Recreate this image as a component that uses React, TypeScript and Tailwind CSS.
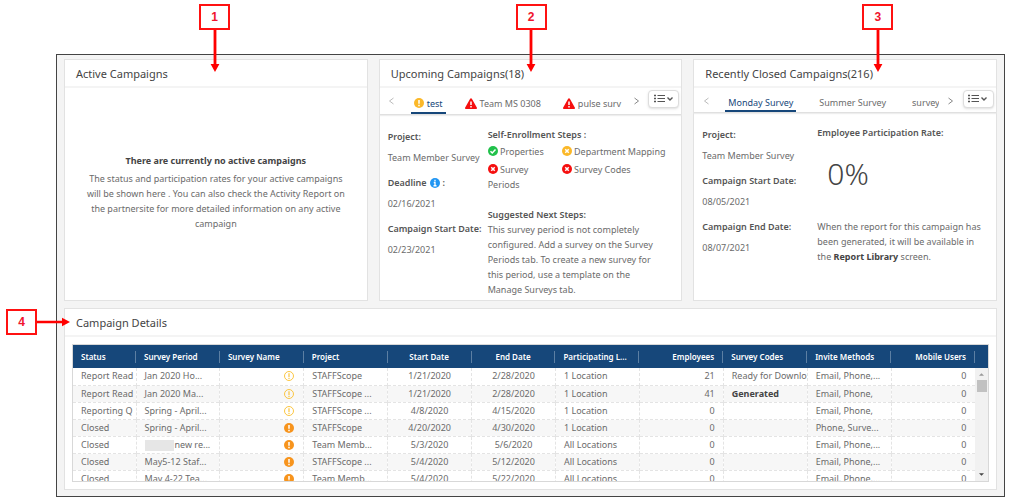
import { ReactNode } from "react";
import clsx from "clsx";

interface CalloutProps {
    label: string;
    className: string;
    side?: boolean;
}

interface CampaignRow {
    status: string;
    period: string;
    redacted?: boolean;
    filled: boolean;
    project: string;
    start: string;
    end: string;
    locations: string;
    employees: number;
    codes: string;
    invite: string;
    mobile: number;
}

const rows: CampaignRow[] = [
    {
        status: "Report Read",
        period: "Jan 2020 Ho...",
        filled: false,
        project: "STAFFScope",
        start: "1/21/2020",
        end: "2/28/2020",
        locations: "1 Location",
        employees: 21,
        codes: "Ready for Downlo",
        invite: "Email, Phone,...",
        mobile: 0,
    },
    {
        status: "Report Read",
        period: "Jan 2020 Ma...",
        filled: false,
        project: "STAFFScope ...",
        start: "1/21/2020",
        end: "2/28/2020",
        locations: "1 Location",
        employees: 41,
        codes: "Generated",
        invite: "Email, Phone,",
        mobile: 0,
    },
    {
        status: "Reporting Q",
        period: "Spring - April...",
        filled: false,
        project: "STAFFScope ...",
        start: "4/8/2020",
        end: "4/15/2020",
        locations: "1 Location",
        employees: 0,
        codes: "",
        invite: "Email, Phone,",
        mobile: 0,
    },
    {
        status: "Closed",
        period: "Spring - April...",
        filled: true,
        project: "STAFFScope",
        start: "4/20/2020",
        end: "4/30/2020",
        locations: "1 Location",
        employees: 0,
        codes: "",
        invite: "Phone, Surve...",
        mobile: 0,
    },
    {
        status: "Closed",
        period: "new re...",
        redacted: true,
        filled: true,
        project: "Team Memb...",
        start: "5/3/2020",
        end: "5/6/2020",
        locations: "All Locations",
        employees: 0,
        codes: "",
        invite: "Email, Phone,...",
        mobile: 0,
    },
    {
        status: "Closed",
        period: "May5-12 Staf...",
        filled: true,
        project: "STAFFScope ...",
        start: "5/4/2020",
        end: "5/12/2020",
        locations: "All Locations",
        employees: 0,
        codes: "",
        invite: "Email, Phone,...",
        mobile: 0,
    },
    {
        status: "Closed",
        period: "May 4-22 Tea...",
        filled: true,
        project: "Team Memb...",
        start: "5/4/2020",
        end: "5/22/2020",
        locations: "All Locations",
        employees: 0,
        codes: "",
        invite: "Email, Phone,...",
        mobile: 0,
    },
];

const columns = [
    { name: "Status", align: "text-left" },
    { name: "Survey Period", align: "text-left" },
    { name: "Survey Name", align: "text-left" },
    { name: "Project", align: "text-left" },
    { name: "Start Date", align: "text-center" },
    { name: "End Date", align: "text-center" },
    { name: "Participating L...", align: "text-left" },
    { name: "Employees", align: "text-right" },
    { name: "Survey Codes", align: "text-left" },
    { name: "Invite Methods", align: "text-left" },
    { name: "Mobile Users", align: "text-right" },
];

const Callout = ({ label, className, side }: CalloutProps) => (
    <div
        className={clsx(
            "absolute z-10 flex items-center",
            side ? "flex-row" : "flex-col",
            className
        )}
    >
        <span className="flex h-[26px] w-[31px] items-center justify-center border-2 border-[#f11] bg-white font-['Liberation_Sans'] text-xs font-bold text-[#f0142d]">
            {label}
        </span>
        {side ? (
            <svg width="33" height="10" viewBox="0 0 33 10" fill="#f00">
                <path d="M0 3.7h25V.8l8 4.2-8 4.2V6.3H0z" />
            </svg>
        ) : (
            <svg width="10" height="42" viewBox="0 0 10 42" fill="#f00">
                <path d="M3.6 0h2.8v34h3L5 42 .6 34h3z" />
            </svg>
        )}
    </div>
);

const CircleIcon = ({ color, children }: { color: string; children: ReactNode }) => (
    <svg
        width="10"
        height="10"
        viewBox="0 0 20 20"
        fill="none"
        stroke="#fff"
        strokeWidth="3"
        className="inline-block shrink-0 align-[-1px]"
    >
        <circle cx="10" cy="10" r="10" fill={color} stroke="none" />
        {children}
    </svg>
);

const CheckIcon = () => (
    <CircleIcon color="#21c14b">
        <path d="M5 10.5l3.5 3.5L15 7" />
    </CircleIcon>
);

const CrossIcon = ({ color }: { color: string }) => (
    <CircleIcon color={color}>
        <path d="M6.5 6.5l7 7M13.5 6.5l-7 7" />
    </CircleIcon>
);

const AlertIcon = ({ color }: { color: string }) => (
    <CircleIcon color={color}>
        <path d="M10 4v7.5M10 13.5v3" />
    </CircleIcon>
);

const AlertOutlineIcon = () => (
    <svg
        width="10"
        height="10"
        viewBox="0 0 20 20"
        fill="none"
        stroke="#fbc02d"
        strokeWidth="1.8"
        className="inline-block"
    >
        <circle cx="10" cy="10" r="9" />
        <path d="M10 4.5v7.5M10 13.5v2.5" strokeWidth="2.2" />
    </svg>
);

const InfoIcon = () => (
    <CircleIcon color="#2196f3">
        <path d="M10 3.5v3M7.5 9H10v6M7 15.5h6" strokeWidth="2.6" />
    </CircleIcon>
);

const TriangleIcon = () => (
    <svg width="12" height="11" viewBox="0 0 24 22" className="shrink-0">
        <path
            d="M12 .5c.9 0 1.5.5 2 1.3l9.600 17c.9 1.500 0 3.200-1.700 3.200H2.100C.4 22-.5 20.300.4 18.800l9.600-17c.5-.8 1.100-1.300 2-1.300z"
            fill="#f50f0f"
        />
        <path d="M12 7v7M12 16v3.200" stroke="#fff" strokeWidth="3" />
    </svg>
);

const ListButton = () => (
    <button
        type="button"
        aria-label="All campaigns"
        className="mt-[2px] mr-[2px] flex h-[18px] w-[31px] shrink-0 items-center justify-center rounded-sm border border-[#ddd] bg-white shadow-sm"
    >
        <svg
            width="20"
            height="10"
            viewBox="0 0 20 10"
            fill="none"
            stroke="#555"
        >
            <path d="M0 1.500h2M0 4.500h2M0 7.500h2" strokeWidth="1.400" />
            <path d="M3.500 1.500h7.500M3.500 4.500h7.500M3.500 7.500h7.500" />
            <path d="M13.500 3.500l2.500 2.500 2.500-2.500" strokeWidth="1.400" />
        </svg>
    </button>
);

const Chevron = ({ d, label, color }: { d: string; label: string; color: string }) => (
    <button
        type="button"
        aria-label={label}
        className="flex h-[26px] w-6 shrink-0 items-center justify-center"
    >
        <svg width="5" height="8" viewBox="0 0 5 8" fill="none" stroke={color}>
            <path d={d} />
        </svg>
    </button>
);

const TabBar = ({ className, children }: { className: string; children: ReactNode }) => (
    <div
        className={clsx(
            "flex items-start border-b border-[#e0e0e0] shadow-[0_1px_1px_#eee]",
            className
        )}
    >
        <Chevron d="M4.500 1L.5 4l4 3" label="Previous" color="#bbb" />
        <div className="flex h-full min-w-0 flex-1 overflow-hidden pl-[7px]">
            {children}
        </div>
        <Chevron d="M.5 1l4 3-4 3" label="Next" color="#888" />
        <ListButton />
    </div>
);

const Tab = ({ active, className, children }: { active?: boolean; className?: string; children: ReactNode }) => (
    <button
        type="button"
        className={clsx(
            "flex h-full shrink-0 items-center gap-[3px] border-b-2 px-[3px] pt-[6px] whitespace-nowrap",
            active
                ? "border-[#16477a] text-[#16477a]"
                : "border-transparent",
            className
        )}
    >
        {children}
    </button>
);

const Card = ({ title, children }: { title: string; children: ReactNode }) => (
    <section className="relative flex min-w-0 flex-col border border-[#e2e2e2] bg-white">
        <h2 className="h-7 border-b-2 border-[#f4f4f4] pl-[11px] text-[11px] leading-[28px] text-[#444]">
            {title}
        </h2>
        {children}
    </section>
);

const Field = ({ label, value }: { label: ReactNode; value: string }) => (
    <div className="flex flex-col gap-[6px]">
        <dt className="font-semibold whitespace-nowrap text-[#555]">{label}</dt>
        <dd className="whitespace-nowrap">{value}</dd>
    </div>
);

const CampaignTable = () => (
    <div className="relative mx-[7px] mt-[7px] h-[138px] overflow-hidden border border-[#d8d8d8]">
        <table className="w-full table-fixed border-collapse whitespace-nowrap">
            <colgroup>
                <col className="w-[63px]" />
                {columns.slice(1).map((c) => (
                    <col key={c.name} />
                ))}
                <col className="w-[13px]" />
            </colgroup>
            <thead className="bg-[#16477a] text-[8px] text-white">
                <tr className="h-[23px]">
                    {columns.map((c) => (
                        <th key={c.name} className={clsx("p-0 font-semibold", c.align)}>
                            <div className="overflow-hidden border-r border-[#5c7fa3] px-2 leading-3">
                                {c.name}
                            </div>
                        </th>
                    ))}
                    <th className="p-0"></th>
                </tr>
            </thead>
            <tbody>
                {rows.map((row, i) => (
                    <tr
                        key={i}
                        className="h-[17px] border-b border-dashed border-[#e4e4e4] even:bg-[#f7f7f7] *:overflow-hidden *:border-r *:border-dashed *:border-[#e4e4e4] *:py-0 *:pl-2 *:leading-4"
                    >
                        <td>{row.status}</td>
                        <td>
                            {row.redacted && (
                                <span className="mr-px inline-block h-[11px] w-[29px] bg-[#e6e6e6] align-middle"></span>
                            )}
                            {row.period}
                        </td>
                        <td className="pr-[9px] text-right">
                            <span className="flex justify-end">
                                {row.filled ? (
                                    <AlertIcon color="#f7941d" />
                                ) : (
                                    <AlertOutlineIcon />
                                )}
                            </span>
                        </td>
                        <td>{row.project}</td>
                        <td className="pr-2 text-center">{row.start}</td>
                        <td className="pr-2 text-center">{row.end}</td>
                        <td>{row.locations}</td>
                        <td className="pr-2 text-right">{row.employees}</td>
                        <td
                            className={clsx(
                                row.codes === "Generated" &&
                                    "font-bold text-[#444]"
                            )}
                        >
                            {row.codes}
                        </td>
                        <td>{row.invite}</td>
                        <td className="pr-2 text-right">{row.mobile}</td>
                    </tr>
                ))}
            </tbody>
        </table>
        {/* scroll track under the header */}
        <div className="absolute top-[23px] right-0 bottom-0 flex w-[13px] flex-col items-center bg-[#f1f1f1] pt-[5px] pb-[5px]">
            <svg width="5" height="3" viewBox="0 0 6 3" fill="#999">
                <path d="M0 3l3-3 3 3z" />
            </svg>
            <div className="mt-1 h-3 w-[10px] bg-[#c1c1c1]"></div>
            <svg width="5" height="3" viewBox="0 0 6 3" fill="#444" className="mt-auto">
                <path d="M0 0l3 3 3-3z" />
            </svg>
        </div>
    </div>
);

const App = () => {
    return (
        <div className="bg-white pt-[54px] pr-[6px] pb-1 pl-14 font-['Noto_Sans','Open_Sans',sans-serif] text-[9px] leading-[15px] text-[#6b6b6b]">
            <main className="border border-[#444] bg-[#f4f4f4] px-[7px] pt-1 pb-[6px]">
                <div className="grid min-h-[242px] grid-cols-3 gap-[11px]">
                    <Card title="Active Campaigns">
                        <Callout label="1" className="-top-14 left-[134px]" />
                        <div className="flex flex-1 flex-col px-5 pt-[65px] text-center">
                            <h3 className="mb-[3px] font-bold text-[#444]">
                                There are currently no active campaigns
                            </h3>
                            <p>
                                The status and participation rates for your
                                active campaigns will be shown here . You can
                                also check the Activity Report on the
                                partnersite for more detailed information on any
                                active campaign
                            </p>
                        </div>
                    </Card>

                    <Card title="Upcoming Campaigns(18)">
                        <Callout label="2" className="-top-14 left-[136px]" />
                        <TabBar className="h-[27px]">
                            <Tab active>
                                <AlertIcon color="#fbb829" />
                                test
                            </Tab>
                            <Tab className="ml-4">
                                <TriangleIcon />
                                Team MS 0308
                            </Tab>
                            <Tab className="ml-4">
                                <TriangleIcon />
                                pulse surv
                            </Tab>
                        </TabBar>
                        <div className="flex pt-3 pl-2">
                            <dl className="flex w-[100px] shrink-0 flex-col gap-[10px] pt-[2px]">
                                <Field
                                    label="Project:"
                                    value="Team Member Survey"
                                />
                                <Field
                                    label={
                                        <span className="flex items-center gap-[3px]">
                                            Deadline <InfoIcon /> :
                                        </span>
                                    }
                                    value="02/16/2021"
                                />
                                <Field
                                    label="Campaign Start Date:"
                                    value="02/23/2021"
                                />
                            </dl>
                            <div className="min-w-0 flex-1">
                                <h3 className="font-semibold text-[#555]">
                                    Self-Enrollment Steps :
                                </h3>
                                <ul className="mt-[2px] grid grid-cols-[74px_1fr] gap-y-[3px]">
                                    <li>
                                        <CheckIcon /> Properties
                                    </li>
                                    <li className="whitespace-nowrap">
                                        <CrossIcon color="#fbb829" /> Department
                                        Mapping
                                    </li>
                                    <li className="pr-4">
                                        <CrossIcon color="#f50f0f" /> Survey
                                        Periods
                                    </li>
                                    <li>
                                        <CrossIcon color="#f50f0f" /> Survey
                                        Codes
                                    </li>
                                </ul>
                                <h3 className="mt-[15px] font-semibold text-[#555]">
                                    Suggested Next Steps:
                                </h3>
                                <p className="pr-4">
                                    This survey period is not completely
                                    configured. Add a survey on the Survey
                                    Periods tab. To create a new survey for this
                                    period, use a template on the Manage Surveys
                                    tab.
                                </p>
                            </div>
                        </div>
                    </Card>

                    <Card title="Recently Closed Campaigns(216)">
                        <Callout label="3" className="-top-14 left-[168px]" />
                        <TabBar className="h-[25px]">
                            <Tab active>Monday Survey</Tab>
                            <Tab className="ml-5">Summer Survey</Tab>
                            <Tab className="ml-5">survey</Tab>
                        </TabBar>
                        <div className="flex pt-3 pl-2">
                            <dl className="flex w-[115px] shrink-0 flex-col gap-[10px] pt-[2px]">
                                <Field
                                    label="Project:"
                                    value="Team Member Survey"
                                />
                                <Field
                                    label="Campaign Start Date:"
                                    value="08/05/2021"
                                />
                                <Field
                                    label="Campaign End Date:"
                                    value="08/07/2021"
                                />
                            </dl>
                            <div className="min-w-0 flex-1">
                                <h3 className="font-semibold text-[#555]">
                                    Employee Participation Rate:
                                </h3>
                                <div className="mt-4 pl-[10px] text-3xl font-light text-[#444]">
                                    0%
                                </div>
                                <p className="mt-[27px] pr-3">
                                    When the report for this campaign has been
                                    generated, it will be available in the{" "}
                                    <b className="text-[#444]">
                                        Report Library
                                    </b>{" "}
                                    screen.
                                </p>
                            </div>
                        </div>
                    </Card>
                </div>

                <div className="mt-[7px] grid min-h-[182px]">
                    <Card title="Campaign Details">
                        <Callout
                            side
                            label="4"
                            className="top-0 -left-[59px]"
                        />
                        <CampaignTable />
                    </Card>
                </div>
            </main>
        </div>
    );
};

export default App;
